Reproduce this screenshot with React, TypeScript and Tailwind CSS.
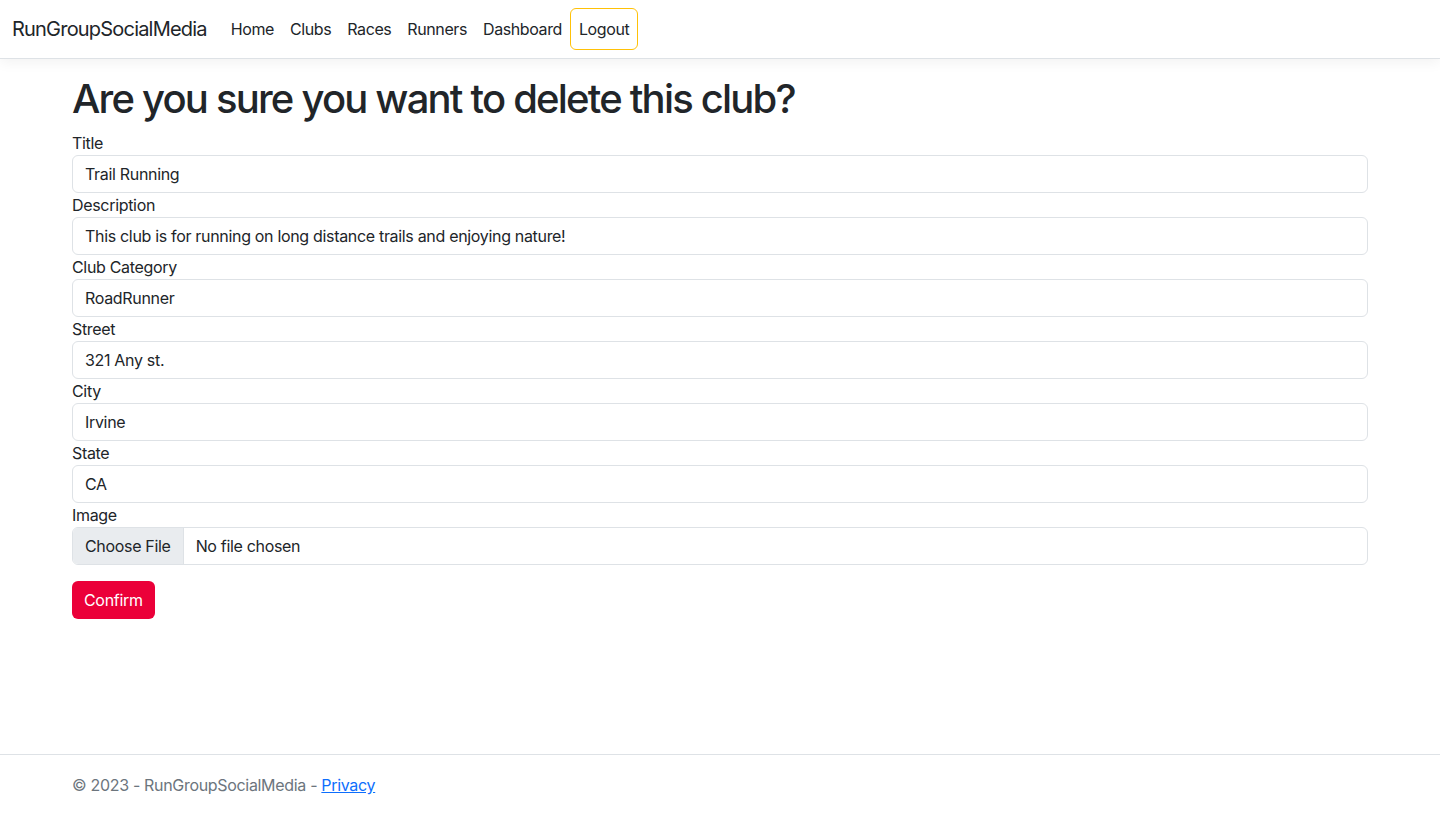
import React from "react";

const fields: { label: string; value: string }[] = [
  { label: "Title", value: "Trail Running" },
  { label: "Description", value: "This club is for running on long distance trails and enjoying nature!" },
  { label: "Club Category", value: "RoadRunner" },
  { label: "Street", value: "321 Any st." },
  { label: "City", value: "Irvine" },
  { label: "State", value: "CA" },
];

export default function App() {
  return (
    <div
      className="min-h-screen flex flex-col bg-white text-[#212529] tracking-[-0.02em]"
      style={{ fontFamily: "Inter, 'Noto Sans', sans-serif" }}
    >
      <header className="mb-4">
        <nav className="bg-white border-b border-[#dee2e6] shadow-[0_4px_12px_rgba(0,0,0,0.05)] px-3 py-2 flex items-center">
          <a className="text-[20px] leading-[30px] py-[5px] mr-4 text-[#212529] tracking-[-0.04em]">RunGroupSocialMedia</a>
          <ul className="flex items-center">
            {["Home", "Clubs", "Races", "Runners", "Dashboard"].map((t) => (
              <li key={t}>
                <a className="block px-2 py-2 text-base leading-6 text-[#212529] tracking-[-0.025em]">{t}</a>
              </li>
            ))}
            <li>
              <a className="block px-2 py-2 text-base leading-6 text-[#212529] tracking-[-0.025em] border border-[#ffc107] rounded-[6px]">
                Logout
              </a>
            </li>
          </ul>
        </nav>
      </header>

      <div className="w-full max-w-[1320px] mx-auto px-3">
        <main className="pb-4">
          <h1 className="text-[40px] leading-[48px] font-medium mb-2 tracking-[-0.045em]">
            Are you sure you want to delete this club?
          </h1>
          <form>
            {fields.map((f) => (
              <div key={f.label}>
                <label className="block text-base leading-6">{f.label}</label>
                <div className="h-[38px] border border-[#dee2e6] rounded-[6px] px-3 flex items-center text-base leading-6 text-[#212529]">
                  {f.value}
                </div>
              </div>
            ))}
            <div>
              <label className="block text-base leading-6">Image</label>
              <div className="h-[38px] border border-[#dee2e6] rounded-[6px] flex items-center text-base leading-6 overflow-hidden">
                <span className="h-full flex items-center px-3 bg-[#e9ecef] border-r border-[#dee2e6]">Choose File</span>
                <span className="px-3">No file chosen</span>
              </div>
            </div>
            <div className="mt-4">
              <button
                type="button"
                className="h-[38px] px-3 rounded-[6px] bg-[#eb0039] text-white text-base leading-6"
              >
                Confirm
              </button>
            </div>
          </form>
        </main>
      </div>

      <footer className="mt-auto border-t border-[#dee2e6] text-[#6c757d] whitespace-nowrap">
        <div className="w-full max-w-[1320px] mx-auto px-3 text-base leading-[60px]">
          © 2023 - RunGroupSocialMedia -{" "}
          <a className="text-[#0d6efd] underline">Privacy</a>
        </div>
      </footer>
    </div>
  );
}
